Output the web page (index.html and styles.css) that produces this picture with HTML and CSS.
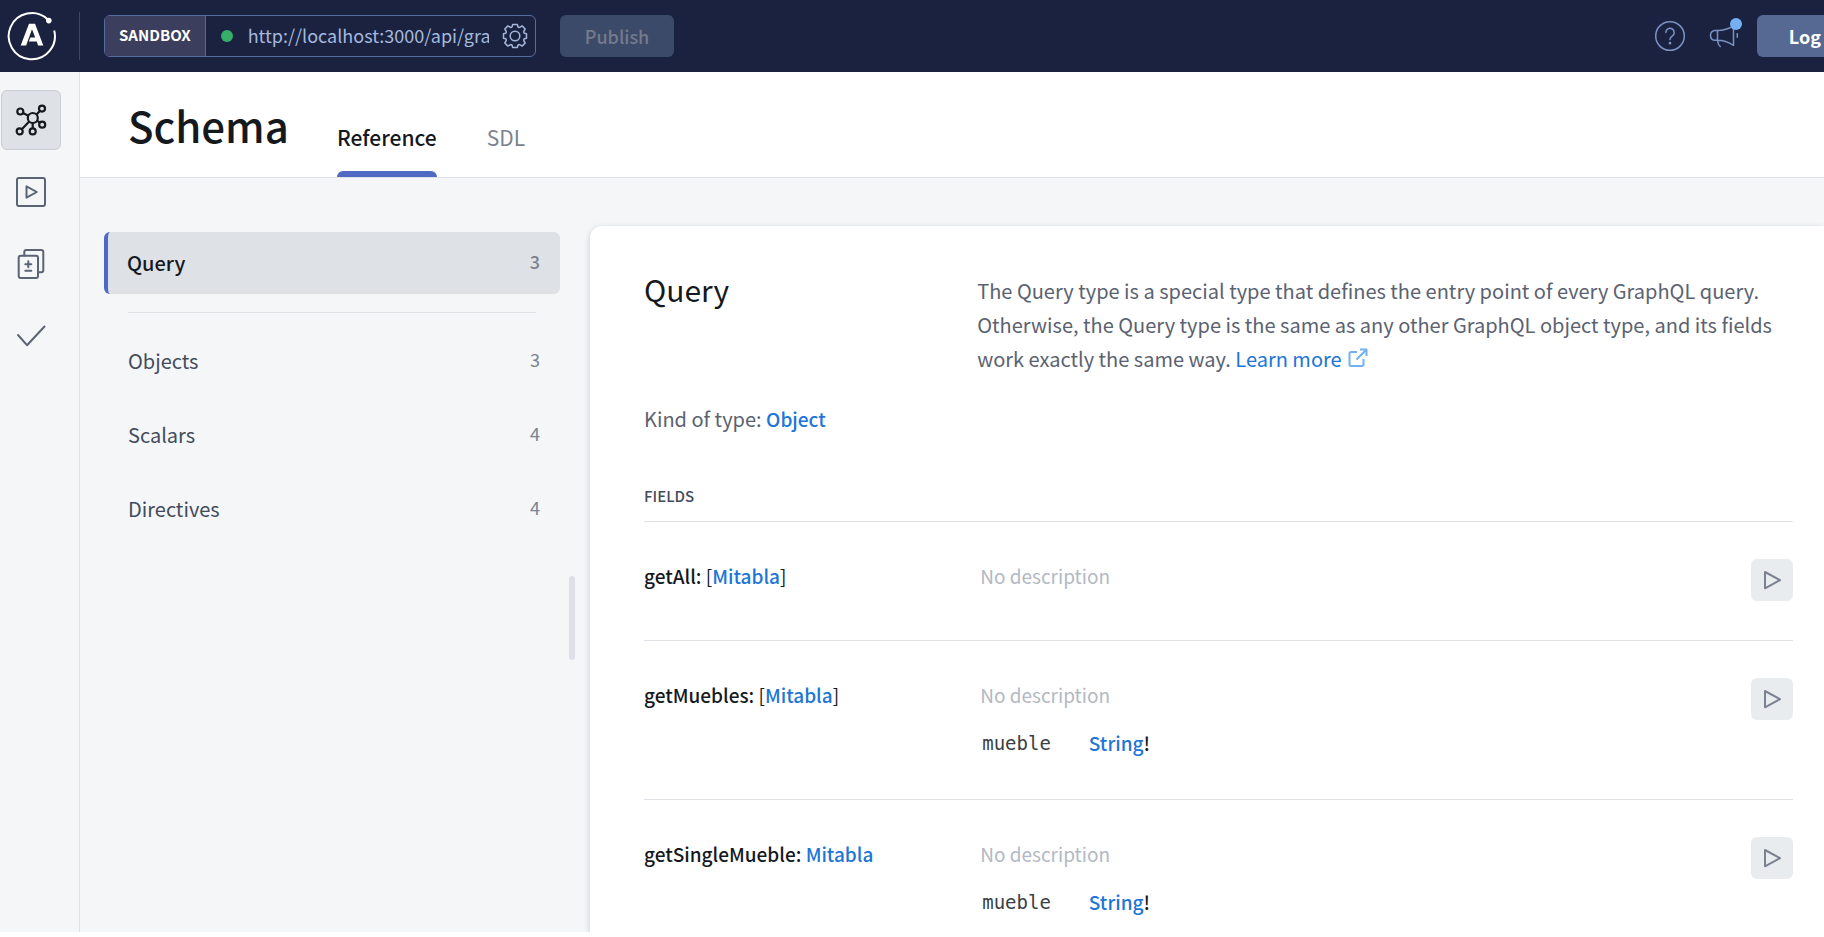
FILE: index.html
```html
<!DOCTYPE html>
<html lang="en">
<head>
<meta charset="utf-8">
<meta name="viewport" content="width=device-width, initial-scale=1">
<title>Schema | Apollo Sandbox</title>
<link rel="stylesheet" href="styles.css">
</head>
<body>
<div class="app">
  <header class="topbar">
    <a class="logo" href="#" aria-label="Apollo home">
      <svg width="50" height="50" viewBox="0 0 50 50" fill="none" stroke="#fff">
        <path d="M47.2 19.5A23.1 23.1 0 1 1 40.5 8.2" stroke-width="2"/>
        <circle cx="41.8" cy="9.6" r="2.8" fill="#fff" stroke="none"/>
        <path d="M22 12.800h6l8.300 21.700h-5.200l-1.400-3.900h-7.800l1.400-4h4.900L25 18.200l-5.900 16.300h-5.400z" fill="#fff" stroke="none"/>
      </svg>
    </a>
    <form class="endpoint">
      <span class="endpoint-tag">SANDBOX</span>
      <span class="status-dot"></span>
      <input class="endpoint-url" type="text" value="http://localhost:3000/api/graphql" aria-label="Endpoint URL">
      <button class="icon-button gear" type="button" aria-label="Connection settings">
        <svg width="26" height="26" viewBox="0 0 26 26" fill="none" stroke="#a3b5d6" stroke-width="1.500" stroke-linejoin="round">
          <circle cx="13" cy="13" r="4.800"/>
          <path d="M10.6 1.600h4.800l.5 2.200q.9 1 2.200.3l2-1.200 3.100 3.100-1.200 2q-.7 1.300.3 2.200l2.200.5v4.600l-2.200.5q-1 .9-.3 2.200l1.200 2-3.100 3.100-2-1.200q-1.300-.7-2.200.3l-.5 2.200h-4.800l-.5-2.200q-.9-1-2.200-.3l-2 1.200-3.100-3.100 1.200-2q.7-1.300-.3-2.200l-2.200-.5v-4.600l2.200-.5q1-.9.3-2.200l-1.200-2 3.100-3.100 2 1.200q1.300.7 2.200-.3z"/>
        </svg>
      </button>
    </form>
    <button class="publish" type="button" disabled>Publish</button>
    <div class="topbar-right">
      <button class="icon-button" type="button" aria-label="Help">
        <svg width="32" height="32" viewBox="0 0 32 32" fill="none" stroke="#7a93c4" stroke-width="1.500" stroke-linecap="round" stroke-linejoin="round">
          <circle cx="16" cy="16" r="14.300"/>
          <path d="M11.800 12.400a4.200 4.200 0 1 1 6.600 3.500c-1.600 1.100-2.400 1.800-2.400 3.600"/>
          <circle cx="16" cy="23.200" r=".6" fill="#7a93c4"/>
        </svg>
      </button>
      <button class="icon-button news" type="button" aria-label="What's new">
        <svg width="32" height="32" viewBox="0 0 32 32" fill="none" stroke="#7a93c4" stroke-width="1.500" stroke-linecap="round" stroke-linejoin="round">
          <path d="M9.500 10.500H6.500a5 5 0 0 0 0 9.800h3zM9.500 10.500c6 0 11.500-1.800 16-4.600v19.600c-4.500-3-10-5.200-16-5.200M9.500 20.300c.2 3 1 4.700 2.700 6.200"/>
          <path d="M29.300 13.700v3.500"/>
        </svg>
        <span class="news-dot"></span>
      </button>
      <button class="login" type="button">Log</button>
    </div>
  </header>

  <div class="workspace">
    <nav class="rail" aria-label="Main">
      <a class="rail-item is-active" href="#" aria-label="Schema">
        <svg width="32" height="32" viewBox="0 0 32 32" fill="none" stroke="#15191d" stroke-width="2.200">
          <circle cx="17.800" cy="14" r="5"/>
          <circle cx="5.300" cy="7.500" r="3"/><circle cx="27" cy="4.600" r="3"/><circle cx="27.200" cy="20.700" r="3"/><circle cx="17.700" cy="27.400" r="3"/><circle cx="4.700" cy="27.400" r="3"/>
          <path d="M8 9l5.400 2.700M21.500 10.500l3.400-3.500M22 16.700l2.800 2M17.700 19v5.300M14.200 17.600l-7.400 7.600"/>
        </svg>
      </a>
      <a class="rail-item" href="#" aria-label="Explorer">
        <svg width="32" height="32" viewBox="0 0 32 32" fill="none" stroke="#5b6474" stroke-width="2" stroke-linejoin="round">
          <rect x="2" y="2" width="28" height="28" rx="2"/><path d="M11.500 10.300v11.400L21.800 16z"/>
        </svg>
      </a>
      <a class="rail-item" href="#" aria-label="Diff">
        <svg width="32" height="32" viewBox="0 0 32 32" fill="none" stroke="#5b6474" stroke-width="2" stroke-linejoin="round" stroke-linecap="round">
          <rect x="3.700" y="7.800" width="19.300" height="22.200" rx="2"/><path d="M9.300 7.800V4a2 2 0 0 1 2-2h15a2 2 0 0 1 2 2v18.300a2 2 0 0 1-2 2H23M13.300 13.300v6M10.300 16.300h6M10.300 22.800h6"/>
        </svg>
      </a>
      <a class="rail-item" href="#" aria-label="Checks">
        <svg width="32" height="32" viewBox="0 0 32 32" fill="none" stroke="#5b6474" stroke-width="2" stroke-linejoin="round" stroke-linecap="round">
          <path d="M3 15l9 10.200L29.500 6.500"/>
        </svg>
      </a>
    </nav>

    <div class="page">
      <div class="page-header">
        <h1 class="page-title">Schema</h1>
        <nav class="tabs" aria-label="Schema views">
          <a class="tab is-active" href="#">Reference</a>
          <a class="tab" href="#">SDL</a>
        </nav>
      </div>
      <div class="page-body">
        <nav class="types" aria-label="Types">
          <a class="type-item is-active" href="#"><span>Query</span><span class="count">3</span></a>
          <hr class="types-rule">
          <a class="type-item" href="#"><span>Objects</span><span class="count">3</span></a>
          <a class="type-item" href="#"><span>Scalars</span><span class="count">4</span></a>
          <a class="type-item" href="#"><span>Directives</span><span class="count">4</span></a>
        </nav>
        <div class="splitter"><span class="splitter-handle"></span></div>
        <main class="card">
          <section class="intro">
            <h2 class="type-name">Query</h2>
            <p class="type-description">The Query type is a special type that defines the entry point of every GraphQL query. Otherwise, the Query type is the same as any other GraphQL object type, and its fields work exactly the same way. <a class="learn-more" href="#">Learn more<svg class="external" width="20" height="20" viewBox="0 0 20 20" fill="none" stroke="#74b0f4" stroke-width="2" stroke-linejoin="round"><path d="M9 4H3a1.500 1.500 0 0 0-1.500 1.500v11A1.500 1.500 0 0 0 3 18h11a1.500 1.500 0 0 0 1.500-1.500V11M8.500 11.500L17.500 2.500M12 1.500h6.500V8"/></svg></a></p>
          </section>
          <p class="kind">Kind of type: <a class="type-link" href="#">Object</a></p>
          <h3 class="fields-title">FIELDS</h3>
          <div class="field">
            <div class="field-name">getAll: <span class="bracket">[</span><a class="type-link" href="#">Mitabla</a><span class="bracket">]</span></div>
            <div class="field-info"><p class="no-description">No description</p></div>
            <button class="run" type="button" aria-label="Run getAll"><svg width="22" height="22" viewBox="0 0 22 22" fill="none" stroke="#7a8290" stroke-width="2" stroke-linejoin="round"><path d="M4 3v16.300L19 11.200z"/></svg></button>
          </div>
          <div class="field">
            <div class="field-name">getMuebles: <span class="bracket">[</span><a class="type-link" href="#">Mitabla</a><span class="bracket">]</span></div>
            <div class="field-info"><p class="no-description">No description</p>
              <p class="argument"><code>mueble</code><span class="argument-type"><a class="type-link" href="#">String</a>!</span></p></div>
            <button class="run" type="button" aria-label="Run getMuebles"><svg width="22" height="22" viewBox="0 0 22 22" fill="none" stroke="#7a8290" stroke-width="2" stroke-linejoin="round"><path d="M4 3v16.300L19 11.200z"/></svg></button>
          </div>
          <div class="field">
            <div class="field-name">getSingleMueble: <a class="type-link" href="#">Mitabla</a></div>
            <div class="field-info"><p class="no-description">No description</p>
              <p class="argument"><code>mueble</code><span class="argument-type"><a class="type-link" href="#">String</a>!</span></p></div>
            <button class="run" type="button" aria-label="Run getSingleMueble"><svg width="22" height="22" viewBox="0 0 22 22" fill="none" stroke="#7a8290" stroke-width="2" stroke-linejoin="round"><path d="M4 3v16.300L19 11.200z"/></svg></button>
          </div>
        </main>
      </div>
    </div>
  </div>
</div>
</body>
</html>
```

FILE: styles.css
```css
* { box-sizing: border-box; }

body {
  margin: 0;
  padding-bottom: 5px;
  height: 100vh;
  overflow: hidden;
  background: #fff;
  color: #15191d;
  font-family: "Noto Sans CJK SC", "Noto Sans", sans-serif;
  font-size: 20px;
  line-height: 34px;
}

a { color: inherit; text-decoration: none; }
button, input { font: inherit; border: 0; margin: 0; padding: 0; background: none; }
h1, h2, h3, p { margin: 0; }
svg { display: block; flex: none; }

.app { height: 100%; display: flex; flex-direction: column; overflow: hidden; }

.topbar {
  flex: none;
  display: flex;
  align-items: center;
  height: 72px;
  background: #1b2240;
}
.logo {
  display: flex;
  align-items: center;
  width: 80px;
  height: 48px;
  padding-left: 7px;
  margin-right: 24px;
  border-right: 1px solid #3b4566;
}
.endpoint {
  display: flex;
  align-items: center;
  width: 432px;
  height: 42px;
  border: 1px solid #566c9b;
  border-radius: 6px;
  overflow: hidden;
}
.endpoint-tag {
  height: 100%;
  padding: 0 14px;
  border-right: 1px solid #566c9b;
  background: #3b3e5c;
  color: #fff;
  font-size: 15px;
  font-weight: 700;
  line-height: 38px;
}
.status-dot { width: 12px; height: 12px; margin: 0 15px; border-radius: 50%; background: #36ad68; }
.endpoint-url { flex: 1; min-width: 0; height: 38px; margin-bottom: 2px; color: #a3b9de; font-size: 18px; }
.icon-button { display: flex; align-items: center; justify-content: center; }
.gear { width: 26px; margin: 0 7px 0 13px; }
.publish {
  width: 114px;
  height: 42px;
  margin-left: 24px;
  border-radius: 6px;
  background: #3c4a69;
  color: #757b8c;
  font-size: 18px;
  font-weight: 500;
}
.topbar-right { display: flex; align-items: center; margin-left: auto; gap: 22px; }
.news { position: relative; }
.news-dot {
  position: absolute;
  top: -2px;
  right: -2px;
  width: 12px;
  height: 12px;
  border-radius: 50%;
  background: #74b0f4;
}
.login {
  height: 42px;
  margin-left: -5px;
  padding: 0 3px 0 32px;
  border-radius: 6px 0 0 6px;
  background: #566992;
  color: #fff;
  font-size: 18px;
  font-weight: 700;
}

.workspace { flex: 1; min-height: 0; display: flex; }
.rail {
  flex: none;
  display: flex;
  flex-direction: column;
  gap: 12px;
  width: 80px;
  padding: 18px 1px;
  border-right: 1px solid #dee2e6;
  background: #f4f6f8;
}
.rail-item {
  display: flex;
  align-items: center;
  justify-content: center;
  width: 60px;
  height: 60px;
  border: 1px solid transparent;
  border-radius: 6px;
}
.rail-item.is-active { background: #dee1e5; border-color: #c8ced6; }

.page { flex: 1; min-width: 0; display: flex; flex-direction: column; background: #f4f6f8; }
.page-header {
  flex: none;
  display: flex;
  align-items: stretch;
  height: 106px;
  padding-left: 48px;
  border-bottom: 1px solid #dee2e6;
  background: #fff;
}
.page-title { margin-right: 48px; font-size: 42px; font-weight: 500; line-height: 106px; }
.tabs { display: flex; gap: 50px; }
.tab { padding-top: 48px; color: #7a8290; font-size: 21px; }
.tab.is-active { position: relative; color: #15191d; font-weight: 500; }
.tab.is-active::after {
  content: "";
  position: absolute;
  left: 0;
  right: 0;
  bottom: 0;
  height: 6px;
  border-radius: 6px 6px 0 0;
  background: #5069c4;
}

.page-body { flex: 1; min-height: 0; display: flex; }
.types { flex: none; width: 480px; padding: 54px 0 0 24px; }
.type-item {
  display: flex;
  align-items: center;
  justify-content: space-between;
  height: 74px;
  padding: 0 20px 0 24px;
  color: #434c5b;
}
.type-item.is-active {
  height: 62px;
  padding-left: 19px;
  border-left: 4px solid #5069c4;
  border-radius: 6px;
  background: #dee1e5;
  color: #15191d;
  font-weight: 500;
}
.count { padding-bottom: 4px; color: #7a8290; font-size: 18px; }
.types-rule { height: 1px; margin: 18px 24px 11px; border: 0; background: #dee2e6; }
.splitter {
  flex: none;
  display: flex;
  align-items: center;
  justify-content: center;
  width: 30px;
  padding: 126px 6px 0 0;
}
.splitter-handle { width: 6px; height: 84px; border-radius: 3px; background: #dfe0e7; }

.card {
  flex: 1;
  min-width: 0;
  margin-top: 48px;
  padding: 48px 31px 0 54px;
  overflow: hidden;
  border-radius: 12px 0 0 0;
  background: #fff;
  box-shadow: 0 2px 6px rgba(21, 25, 45, 0.2);
}
.intro { display: grid; grid-template-columns: 29fr 71fr; }
.type-name { font-size: 30px; font-weight: 400; line-height: 30px; }
.type-description { color: #5b6270; }
.learn-more { color: #2075d6; }
.external { display: inline-block; margin-left: 6px; vertical-align: -1px; }
.type-link { color: #2075d6; font-size: 19px; font-weight: 500; }
.kind { margin-top: 26px; color: #5b6270; }
.fields-title {
  margin-top: 43px;
  padding-bottom: 8px;
  border-bottom: 1px solid #dee2e6;
  color: #434c5b;
  font-size: 15px;
  font-weight: 500;
}
.field {
  display: grid;
  grid-template-columns: 29fr 67fr 4fr;
  padding: 37px 0 39px;
  border-bottom: 1px solid #dee2e6;
  font-size: 19px;
}
.field-name { font-weight: 500; }
.bracket { font-weight: 400; }
.no-description { padding-left: 3px; color: #b2b9c3; }
.argument { display: flex; gap: 38px; padding: 14px 0 0 5px; }
.argument code { color: #3a3f45; font-family: "DejaVu Sans Mono", monospace; font-size: 19px; }
.argument-type { font-weight: 500; }
.run {
  display: flex;
  align-items: center;
  justify-content: center;
  justify-self: end;
  width: 42px;
  height: 42px;
  border-radius: 6px;
  background: #e9ecef;
}
```
